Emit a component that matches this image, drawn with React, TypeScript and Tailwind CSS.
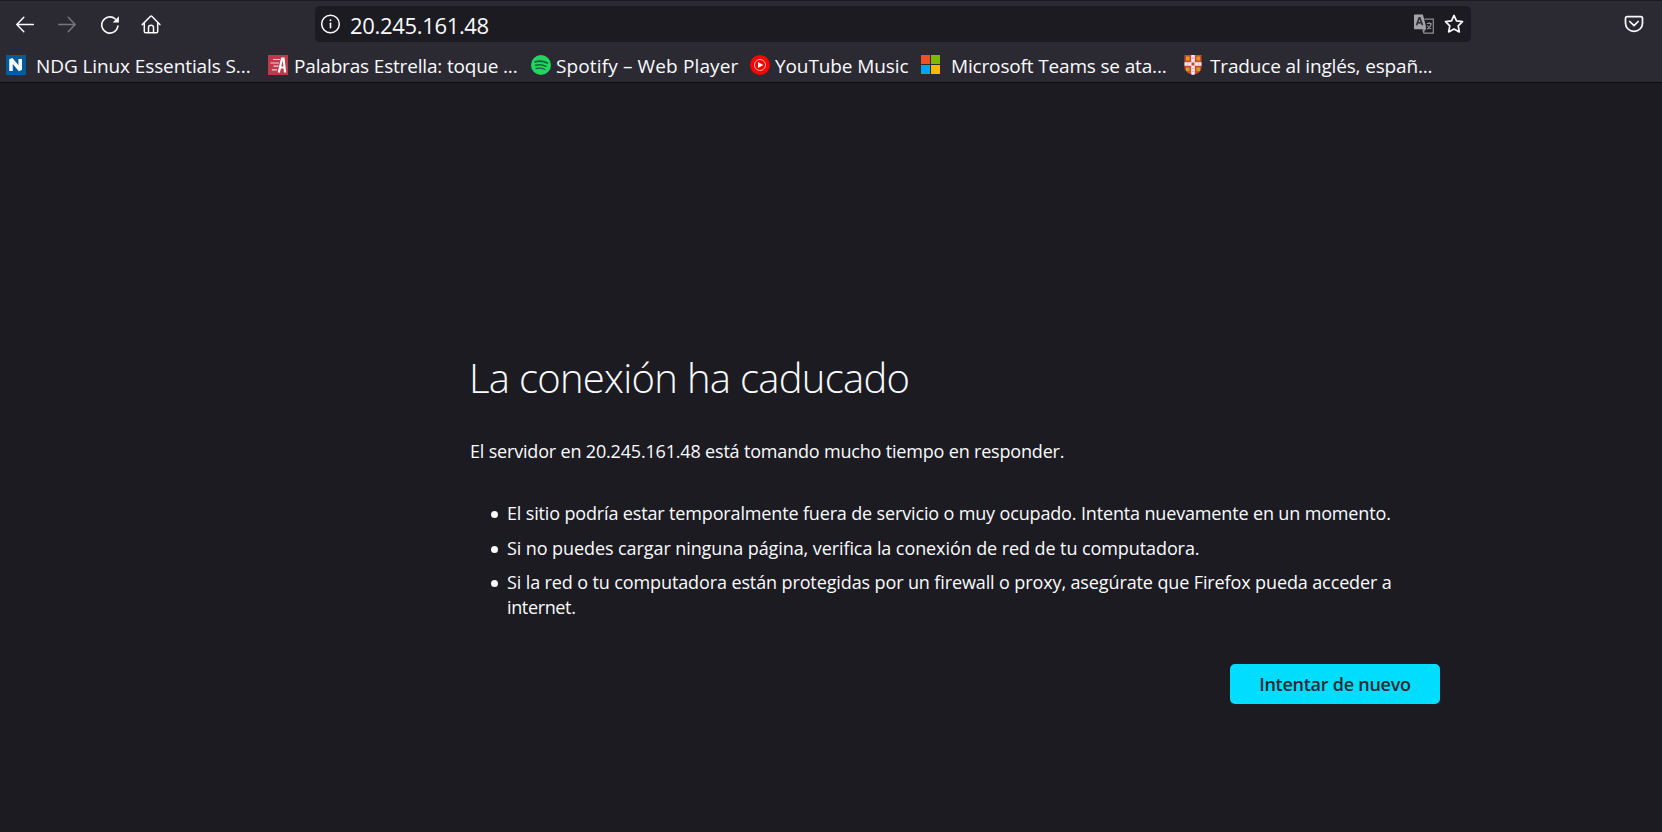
import type { ReactNode } from 'react';

function Icon({ children, className = '' }: { children: ReactNode; className?: string }) {
  return (
    <svg
      width="20"
      height="20"
      viewBox="0 0 20 20"
      fill="none"
      stroke="currentColor"
      strokeWidth="1.5"
      strokeLinecap="round"
      strokeLinejoin="round"
      className={`shrink-0 ${className}`}
    >
      {children}
    </svg>
  );
}

function Toolbar() {
  return (
    <div className="flex h-9 items-center">
      <Icon className="ml-[15px]">
        <path d="M18.300 10.500H1.800M8.800 3.300 1.800 10.500l7 7.200" />
      </Icon>
      <Icon className="ml-[22px] text-[#77767c]">
        <path d="M1.700 10.500h16.500M11.200 3.300l7 7.200-7 7.200" />
      </Icon>
      <Icon className="ml-[23px]">
        <path d="M17.900 12A8.100 8.100 0 1 1 15.300 5" strokeWidth="1.600" />
        <path d="M18.900 2.200v6.200h-6.200z" fill="currentColor" stroke="none" />
      </Icon>
      <Icon className="ml-[21px]">
        <path d="M1.200 10.600 9.600 2.300q.6-.6 1.200 0l8.100 8.300M3.300 9.300v8.200q0 1.300 1.300 1.300h10.800q1.300 0 1.300-1.300V9.300" />
        <path d="M7.500 18.500v-5q0-2.200 2.500-2.200t2.500 2.200v5" />
      </Icon>
      <div className="ml-[154px] flex h-9 w-[1156px] items-center rounded-[5px] bg-[#1c1b22] pr-[7px] pl-[6px]">
        <Icon>
          <circle cx="9.5" cy="10" r="8.8" />
          <path d="M9.5 9.2v4.6" strokeWidth="1.6" />
          <path d="M9.5 6.2v.1" strokeWidth="1.9" />
        </Icon>
        <span className="mt-px ml-[9px] flex-1 text-[22px] leading-9 tracking-[-0.33px]">20.245.161.48</span>
        <svg width="20" height="20" viewBox="0 0 20 20" className="mr-[10px] shrink-0">
          <path d="M10.5 5.2h8.8v14H10l-1-3" fill="none" stroke="#8f8f94" strokeWidth="1.2" />
          <path d="M.8.5h8.1l2.9 11.2.2 3.7-3.2-.1H.8q-.8 0-.8-.8V1.3Q0 .5.8.5Z" fill="#a3a3a8" />
          <path d="M12 15.3 9.2 19l-.8-3.7z" fill="#8f8f94" />
          <path d="m2.5 11.3 2.7-7.5h.6l2.7 7.5M3.5 8.7h4" fill="none" stroke="#2b2a33" strokeWidth="1.6" />
          <path d="M12.7 9.5h5M15.2 8v1.5M17.1 9.8q-.8 4-4 5.3M13.3 11.5q1.3 2.4 4 3.5" fill="none" stroke="#8f8f94" strokeWidth="1.2" />
        </svg>
        <Icon>
          <path d="m10 1.4 2.5 5.4 6 .8-4.3 4.2 1.1 6.1-5.3-2.9-5.3 2.9 1.1-6.1-4.3-4.2 6-.8z" strokeWidth="1.7" />
        </Icon>
      </div>
      <Icon className="ml-[153px]">
        <path d="M3.2 2.7h13.6q1.7 0 1.7 1.7v4.8a8.5 8.2 0 0 1-17 0V4.4q0-1.7 1.7-1.7Z" strokeWidth="1.7" />
        <path d="m5.8 7.5 4.2 4.2 4.2-4.2" strokeWidth="1.7" />
      </Icon>
    </div>
  );
}

function NdgIcon() {
  return (
    <svg width="20" height="20" viewBox="0 0 20 20" className="shrink-0">
      <path d="M0 0h20v20H0z" fill="#005b9a" />
      <path d="M5 16V4.2L14.2 15V4" fill="none" stroke="#fff" strokeWidth="3.5" strokeLinejoin="bevel" />
    </svg>
  );
}

function PalabrasIcon() {
  return (
    <svg width="20" height="20" viewBox="0 0 20 20" className="shrink-0">
      <path d="M0 0h20v20H0z" fill="#c0394b" />
      <path d="M10.8 17.5 14 3.5h1.6l1.5 14M12 12.5h4.5" fill="none" stroke="#fff" strokeWidth="2.2" />
      <path d="M5 4.5h7M2.5 8h8.5M5.5 11.2h5M3.8 14.8H9" stroke="#f3cfd3" strokeWidth="1.2" />
    </svg>
  );
}

function SpotifyIcon() {
  return (
    <svg width="20" height="20" viewBox="0 0 20 20" className="shrink-0">
      <circle cx="10" cy="10" r="10" fill="#1ed760" />
      <g fill="none" stroke="#23593f" strokeLinecap="round">
        <path d="M4 6.8q6.5-1.8 12.2 1.2" strokeWidth="1.8" />
        <path d="M4.7 10.3q5.4-1.5 10.3 1.1" strokeWidth="1.5" />
        <path d="M5.2 13.5q4.7-1.1 8.6 1" strokeWidth="1.3" />
      </g>
    </svg>
  );
}

function YouTubeMusicIcon() {
  return (
    <svg width="20" height="20" viewBox="0 0 20 20" className="shrink-0">
      <circle cx="10" cy="10" r="10" fill="#f00" />
      <circle cx="10" cy="10" r="5.5" fill="none" stroke="#ffb0b0" strokeWidth="1" />
      <path d="m8 6.900 5.300 3.100L8 13.100z" fill="#fff" />
    </svg>
  );
}

function MicrosoftIcon() {
  return (
    <svg width="20" height="20" viewBox="0 0 20 20" className="shrink-0">
      <path d="M0 0h9v9H0z" fill="#f25022" />
      <path d="M10 0h9v9h-9z" fill="#7fba00" />
      <path d="M0 10h9v9H0z" fill="#00a4ef" />
      <path d="M10 10h9v9h-9z" fill="#ffb900" />
    </svg>
  );
}

function ShieldIcon() {
  return (
    <svg width="18" height="20" viewBox="0 0 18 20" className="shrink-0">
      <path d="M.5 0h17v13q0 4.5-8.500 7-8.500-2.500-8.500-7z" fill="#cf4a2c" />
      <path d="M2 1.500h3.500v4H2zM12.500 1.500H16v4h-3.500zM2 12.500h3.500v3.500H2zM12.500 12.500H16v3.500h-3.500z" fill="#dc9a22" />
      <path d="M7.200 0h3.600v7.200h6.700v3.600h-6.700v8.500L9 20l-1.800-.7v-8.500H.5V7.200h6.700z" fill="#ece9f0" />
      <path d="M7.500 7.500h3v3h-3z" fill="#e0382c" />
      <path d="M2.800 9h1.500M13.700 9h1.500M9 2.500v1.500M9 13v1.300M9 16v1" stroke="#a9a9c4" strokeWidth="1.200" />
    </svg>
  );
}

function Bookmarks() {
  return (
    <div className="mt-[11px] flex h-6 items-center text-[19px] leading-6 whitespace-nowrap">
      <div className="ml-[6px] flex w-[262px] items-center">
        <NdgIcon />
        <span className="mt-px ml-[10px] tracking-[-0.1px]">NDG Linux Essentials S...</span>
      </div>
      <div className="flex w-[263px] items-center">
        <PalabrasIcon />
        <span className="mt-px ml-[6px] tracking-[-0.17px]">Palabras Estrella: toque ...</span>
      </div>
      <div className="flex w-[219px] items-center">
        <SpotifyIcon />
        <span className="mt-px ml-[5px] tracking-[0.13px]">Spotify – Web Player</span>
      </div>
      <div className="flex w-[171px] items-center">
        <YouTubeMusicIcon />
        <span className="mt-px ml-[5px] tracking-[-0.1px]">YouTube Music</span>
      </div>
      <div className="flex w-[263px] items-center">
        <MicrosoftIcon />
        <span className="mt-px ml-[10px] tracking-[-0.16px]">Microsoft Teams se ata...</span>
      </div>
      <div className="flex items-center">
        <ShieldIcon />
        <span className="mt-px ml-[8px] tracking-[-0.16px]">Traduce al inglés, españ...</span>
      </div>
    </div>
  );
}

function Bullet() {
  return <span className="mt-[9.5px] mr-[9px] size-[7px] shrink-0 rounded-full bg-[#fbfbfe]" />;
}

export default function App() {
  return (
    <div className="flex h-[832px] w-[1662px] flex-col overflow-hidden bg-[#1c1b22] font-['Open_Sans',sans-serif] text-[#fbfbfe]">
      <header className="h-[83px] border-t border-b border-t-[#1c1b22] border-b-[#0c0c0d] bg-[#2b2a33] pt-[5px]">
        <Toolbar />
        <Bookmarks />
      </header>
      <main className="ml-[470px] w-[970px] pt-[271px] text-[18px] leading-[25px] whitespace-nowrap">
        <h1 className="-ml-px text-[40px] leading-[48px] font-light tracking-[-0.72px]">La conexión ha caducado</h1>
        <p className="mt-[37px] tracking-[-0.18px]">
          El servidor en 20.245.161.48 está tomando mucho tiempo en responder.
        </p>
        <ul className="mt-[37px] pl-[21px]">
          <li className="mb-[10px] flex">
            <Bullet />
            <span className="tracking-[-0.15px]">
              El sitio podría estar temporalmente fuera de servicio o muy ocupado. Intenta nuevamente en un momento.
            </span>
          </li>
          <li className="mb-[9px] flex">
            <Bullet />
            <span className="tracking-[-0.085px]">
              Si no puedes cargar ninguna página, verifica la conexión de red de tu computadora.
            </span>
          </li>
          <li className="flex">
            <Bullet />
            <span>
              <span className="block tracking-[-0.117px]">
                Si la red o tu computadora están protegidas por un firewall o proxy, asegúrate que Firefox pueda acceder a
              </span>
              <span className="block tracking-[-0.36px]">internet.</span>
            </span>
          </li>
        </ul>
        <div className="mt-[44px] flex justify-end">
          <button className="h-10 w-[210px] rounded-[5px] bg-[#00ddff] text-[18px] leading-10 font-semibold tracking-[-0.25px] text-[#2b2a33]">
            Intentar de nuevo
          </button>
        </div>
      </main>
    </div>
  );
}
